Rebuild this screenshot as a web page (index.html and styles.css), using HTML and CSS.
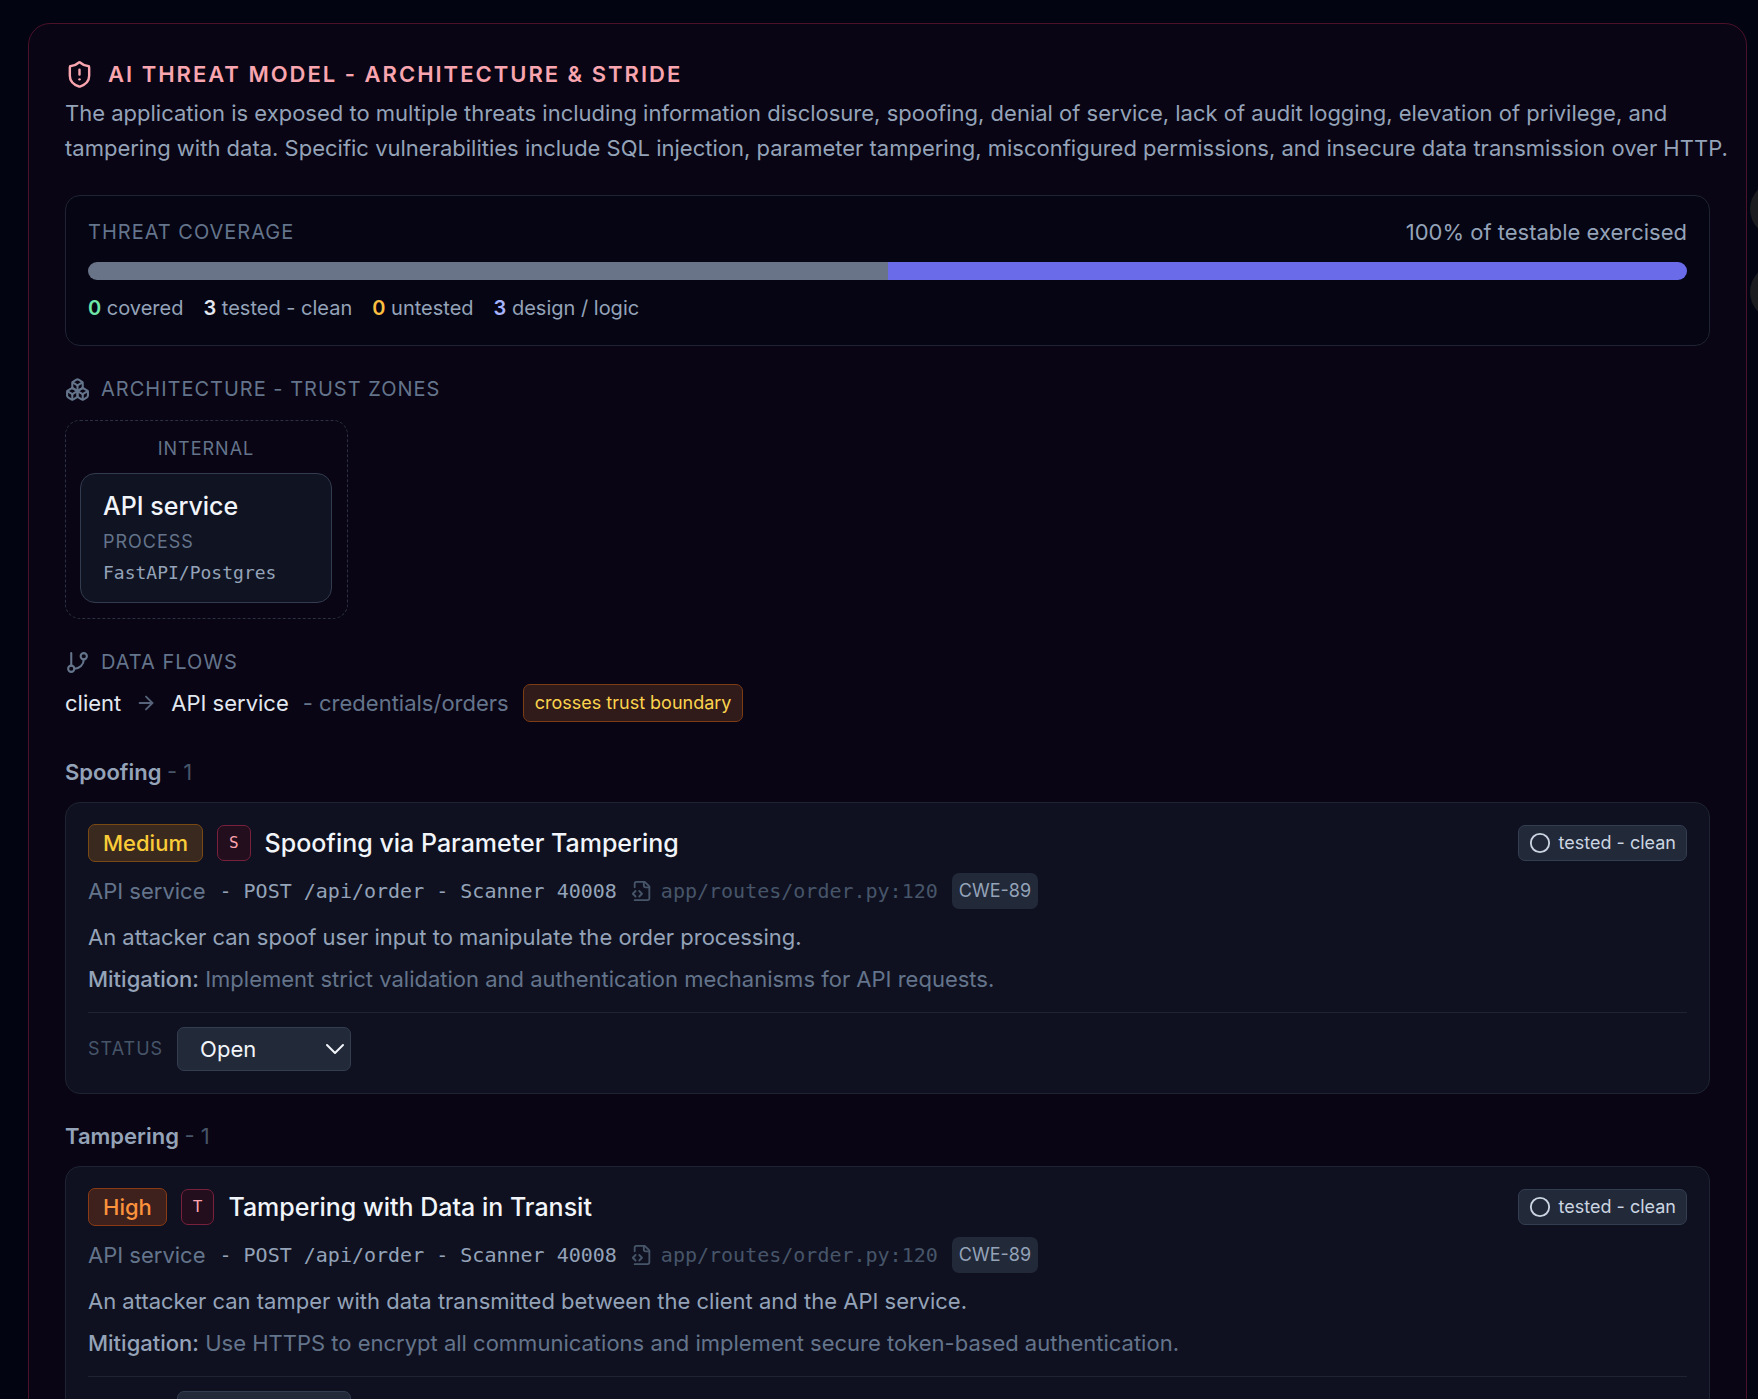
FILE: index.html
```html
<!DOCTYPE html>
<html lang="en">
<head>
<meta charset="utf-8">
<meta name="viewport" content="width=device-width, initial-scale=1">
<title>AI Threat Model</title>
<link rel="stylesheet" href="styles.css">
</head>
<body>
<svg class="sprite" aria-hidden="true">
  <symbol id="i-file" viewBox="0 0 24 24"><path d="M4 22h14a2 2 0 0 0 2-2V7l-5-5H6a2 2 0 0 0-2 2v4"/><path d="M14 2v4a2 2 0 0 0 2 2h4"/><path d="m5 12-3 3 3 3"/><path d="m9 18 3-3-3-3"/></symbol>
  <symbol id="i-circle" viewBox="0 0 24 24"><circle cx="12" cy="12" r="10"/></symbol>
</svg>
<main class="panel">
  <header class="intro">
    <h1 class="title">
      <svg class="icon icon-lg" viewBox="0 0 24 24"><path d="M20 13c0 5-3.5 7.500-7.660 8.950a1 1 0 0 1-.67-.01C7.500 20.500 4 18 4 13V6a1 1 0 0 1 1-1c2 0 4.500-1.200 6.240-2.720a1.170 1.170 0 0 1 1.520 0C14.510 3.810 17 5 19 5a1 1 0 0 1 1 1z"/><path d="M12 8v4"/><path d="M12 16h.01"/></svg>
      AI Threat Model - Architecture &amp; STRIDE
    </h1>
    <p class="text">The application is exposed to multiple threats including information disclosure, spoofing, denial of service, lack of audit logging, elevation of privilege, and tampering with data. Specific vulnerabilities include SQL injection, parameter tampering, misconfigured permissions, and insecure data transmission over HTTP.</p>
  </header>

  <section class="coverage">
    <div class="coverage-head">
      <h2 class="label">Threat coverage</h2>
      <span class="text">100% of testable exercised</span>
    </div>
    <div class="bar">
      <div class="bar-clean" style="width: 50%"></div>
      <div class="bar-design" style="width: 50%"></div>
    </div>
    <ul class="legend">
      <li><b class="n-covered">0</b> covered</li>
      <li><b class="n-clean">3</b> tested - clean</li>
      <li><b class="n-untested">0</b> untested</li>
      <li><b class="n-design">3</b> design / logic</li>
    </ul>
  </section>

  <section class="block">
    <h2 class="label">
      <svg class="icon icon-md" viewBox="0 0 24 24"><path d="M2.970 12.920A2 2 0 0 0 2 14.630v3.240a2 2 0 0 0 .97 1.710l3 1.800a2 2 0 0 0 2.060 0L12 19v-5.500l-5-3-4.030 2.420Z"/><path d="m7 16.500-4.740-2.850"/><path d="m7 16.500 5-3"/><path d="M7 16.500v5.170"/><path d="M12 13.500V19l3.970 2.380a2 2 0 0 0 2.060 0l3-1.800a2 2 0 0 0 .97-1.710v-3.240a2 2 0 0 0-.97-1.710L17 10.500l-5 3Z"/><path d="m17 16.500-5-3"/><path d="m17 16.500 4.740-2.850"/><path d="M17 16.500v5.170"/><path d="M7.970 4.420A2 2 0 0 0 7 6.130v4.370l5 3 5-3V6.130a2 2 0 0 0-.97-1.710l-3-1.800a2 2 0 0 0-2.060 0l-3 1.800Z"/><path d="M12 8 7.260 5.150"/><path d="m12 8 4.740-2.850"/><path d="M12 13.500V8"/></svg>
      Architecture - trust zones
    </h2>
    <div class="zones">
      <div class="zone">
        <h3 class="tiny">Internal</h3>
        <div class="node">
          <strong class="node-name">API service</strong>
          <span class="tiny">Process</span>
          <code class="node-tech">FastAPI/Postgres</code>
        </div>
      </div>
    </div>
  </section>

  <section class="block flows">
    <h2 class="label">
      <svg class="icon icon-md" viewBox="0 0 24 24"><path d="M6 3v12"/><circle cx="18" cy="6" r="3"/><circle cx="6" cy="18" r="3"/><path d="M18 9a9 9 0 0 1-9 9"/></svg>
      Data flows
    </h2>
    <div class="flow">
      <span>client</span>
      <svg class="icon icon-sm" viewBox="0 0 24 24"><path d="M5 12h14"/><path d="m12 5 7 7-7 7"/></svg>
      <span>API service</span>
      <span class="flow-data">- credentials/orders</span>
      <span class="chip chip-boundary">crosses trust boundary</span>
    </div>
  </section>

  <section class="group">
    <h2 class="group-title">Spoofing <span class="count">- 1</span></h2>
    <article class="card">
      <div class="card-head">
        <span class="severity severity-medium">Medium</span>
        <span class="letter">S</span>
        <h3 class="card-title">Spoofing via Parameter Tampering</h3>
        <span class="chip chip-clean"><svg class="icon icon-sm" viewBox="0 0 24 24"><use href="#i-circle"/></svg>tested - clean</span>
      </div>
      <div class="meta">
        <span class="component">API service</span>
        <code class="endpoint">- POST /api/order - Scanner 40008</code>
        <code class="source"><svg class="icon icon-sm" viewBox="0 0 24 24"><use href="#i-file"/></svg>app/routes/order.py:120</code>
        <span class="cwe">CWE-89</span>
      </div>
      <p class="text desc">An attacker can spoof user input to manipulate the order processing.</p>
      <p class="text mitigation"><b>Mitigation:</b> Implement strict validation and authentication mechanisms for API requests.</p>
      <div class="status">
        <label class="tiny" for="status-spoofing">Status</label>
        <span class="select">
          <select id="status-spoofing"><option>Open</option><option>Mitigated</option><option>Accepted</option></select>
          <svg class="icon icon-chevron" viewBox="0 0 24 24"><path d="m4 8 8 8 8-8"/></svg>
        </span>
      </div>
    </article>
  </section>

  <section class="group">
    <h2 class="group-title">Tampering <span class="count">- 1</span></h2>
    <article class="card">
      <div class="card-head">
        <span class="severity severity-high">High</span>
        <span class="letter">T</span>
        <h3 class="card-title">Tampering with Data in Transit</h3>
        <span class="chip chip-clean"><svg class="icon icon-sm" viewBox="0 0 24 24"><use href="#i-circle"/></svg>tested - clean</span>
      </div>
      <div class="meta">
        <span class="component">API service</span>
        <code class="endpoint">- POST /api/order - Scanner 40008</code>
        <code class="source"><svg class="icon icon-sm" viewBox="0 0 24 24"><use href="#i-file"/></svg>app/routes/order.py:120</code>
        <span class="cwe">CWE-89</span>
      </div>
      <p class="text desc">An attacker can tamper with data transmitted between the client and the API service.</p>
      <p class="text mitigation"><b>Mitigation:</b> Use HTTPS to encrypt all communications and implement secure token-based authentication.</p>
      <div class="status">
        <label class="tiny" for="status-tampering">Status</label>
        <span class="select">
          <select id="status-tampering"><option>Open</option><option>Mitigated</option><option>Accepted</option></select>
          <svg class="icon icon-chevron" viewBox="0 0 24 24"><path d="m4 8 8 8 8-8"/></svg>
        </span>
      </div>
    </article>
  </section>
</main>
<div class="floaters" aria-hidden="true"><span class="floater"></span><span class="floater"></span></div>
</body>
</html>
```

FILE: styles.css
```css
* { box-sizing: border-box; margin: 0; padding: 0; }

html { background: #020412; scrollbar-width: none; }

body {
  padding: 23px 11px 23px 28px;
  color: #94a3b8;
  font-family: Inter, "Liberation Sans", sans-serif;
  font-size: 22px;
  line-height: 36px;
}

h1, h2, h3 { font-size: inherit; font-weight: 400; }
code { font-family: "DejaVu Sans Mono", monospace; }

.sprite { display: none; }

.icon {
  flex: none;
  fill: none;
  stroke: currentColor;
  stroke-width: 2;
  stroke-linecap: round;
  stroke-linejoin: round;
}
.icon-lg { width: 29px; height: 29px; }
.icon-md { width: 25px; height: 25px; }
.icon-sm { width: 22px; height: 22px; }

.panel {
  padding: 32px 36px;
  border: 1px solid #4b1229;
  border-radius: 22px;
  background: #090514;
}

.intro { margin-right: -20px; }
.title {
  display: flex;
  align-items: center;
  gap: 14px;
  margin-bottom: 4px;
  color: #f9a5af;
  font-weight: 600;
  letter-spacing: 2px;
  text-transform: uppercase;
}

.text { line-height: 35px; }

.coverage {
  margin-top: 29px;
  padding: 18px 22px 19px;
  border: 1px solid #1e2433;
  border-radius: 15px;
  background: #060514;
}
.coverage-head { display: flex; justify-content: space-between; align-items: center; }

.label {
  display: flex;
  align-items: center;
  gap: 11px;
  color: #64748b;
  font-size: 20px;
  line-height: 36px;
  letter-spacing: 1px;
  text-transform: uppercase;
}

.bar {
  display: flex;
  height: 18px;
  margin: 12px 0 10px;
  border-radius: 9px;
  overflow: hidden;
}
.bar-clean { background: #6a7488; }
.bar-design { background: #6a6be9; }

.legend { display: flex; gap: 20px; list-style: none; font-size: 20px; }
.legend b { font-weight: 600; }
.n-covered { color: #6ee7a7; }
.n-clean { color: #e2e8f0; }
.n-untested { color: #fbbf40; }
.n-design { color: #a5b4fc; }

.block { margin-top: 25px; }

.tiny {
  color: #64748b;
  font-size: 18px;
  line-height: 30px;
  letter-spacing: 1px;
  text-transform: uppercase;
}

.zones { display: flex; margin-top: 13px; }
.zone {
  padding: 13px 15px 15px 14px;
  border: 1px dashed #2a3142;
  border-radius: 15px;
}
.zone > .tiny { margin-bottom: 9px; text-align: center; }
.node {
  display: flex;
  flex-direction: column;
  width: 252px;
  padding: 12px 22px 13px;
  border: 1px solid #333c4e;
  border-radius: 15px;
  background: #101322;
}
.node-name { color: #f1f5f9; font-size: 25px; font-weight: 500; line-height: 41px; }
.node-tech { font-size: 18px; line-height: 32px; }

.flows { margin-bottom: 32px; }
.flow { display: flex; align-items: center; gap: 14px; margin-top: 4px; color: #e2e8f0; }
.flow-data { color: #64748b; }
.flow .icon { color: #56637a; }

.chip {
  display: flex;
  align-items: center;
  padding: 0 11px;
  border: 1px solid;
  border-radius: 7px;
  font-size: 18px;
}
.chip-boundary { border-color: #7c3c14; background: #301a1a; color: #fcd34d; }
.chip-clean { gap: 8px; margin-left: auto; padding: 0 10px; border-color: #333e50; background: #222939; color: #cbd5e1; line-height: 34px; }

.group { margin-top: 24px; }
.group-title { margin-bottom: 12px; font-weight: 600; }
.count { color: #475569; font-weight: 400; }

.card {
  padding: 21px 22px 22px;
  border: 1px solid #1e2433;
  border-radius: 15px;
  background: #0f1120;
}
.card-head { display: flex; align-items: center; gap: 14px; }
.severity { padding: 0 14px; border: 1px solid; border-radius: 7px; font-weight: 500; }
.severity-medium { border-color: #7a4a14; background: #3a291f; color: #facc38; }
.severity-high { border-color: #8a3b14; background: #3e201c; color: #fb923c; }
.letter {
  padding: 0 11px;
  border: 1px solid #78203c;
  border-radius: 7px;
  background: #220e1d;
  color: #fda4af;
  font-family: "DejaVu Sans Mono", monospace;
  font-size: 16px;
  line-height: 34px;
}
.card-title { color: #f1f5f9; font-size: 25px; font-weight: 500; }

.meta { display: flex; align-items: center; gap: 14px; margin-top: 11px; color: #64748b; }
.endpoint { color: #94a3b8; font-size: 20px; }
.source { display: flex; align-items: center; gap: 8px; color: #475569; font-size: 20px; }
.cwe { padding: 0 7px; border-radius: 7px; background: #222939; color: #94a3b8; font-size: 18px; }

.desc { margin-top: 11px; }
.mitigation { margin-top: 7px; color: #64748b; }
.mitigation b { color: #94a3b8; font-weight: 500; }

.status {
  display: flex;
  align-items: center;
  gap: 14px;
  margin-top: 15px;
  padding-top: 14px;
  border-top: 1px solid #1e2433;
}
.status .tiny { color: #475569; }
.select { display: grid; align-items: center; width: 174px; }
.select select {
  grid-area: 1 / 1;
  height: 44px;
  padding: 0 22px;
  border: 1px solid #333e50;
  border-radius: 7px;
  background: #222939;
  color: #f1f5f9;
  font: inherit;
  appearance: none;
}
.icon-chevron {
  grid-area: 1 / 1;
  justify-self: end;
  width: 24px;
  height: 24px;
  margin-right: 4px;
  color: #f1f5f9;
  pointer-events: none;
}

.floaters {
  position: fixed;
  top: 181px;
  right: -48px;
  display: grid;
  gap: 27px;
}
.floater { width: 56px; height: 56px; border-radius: 50%; background: #1b1c1f; }
```
